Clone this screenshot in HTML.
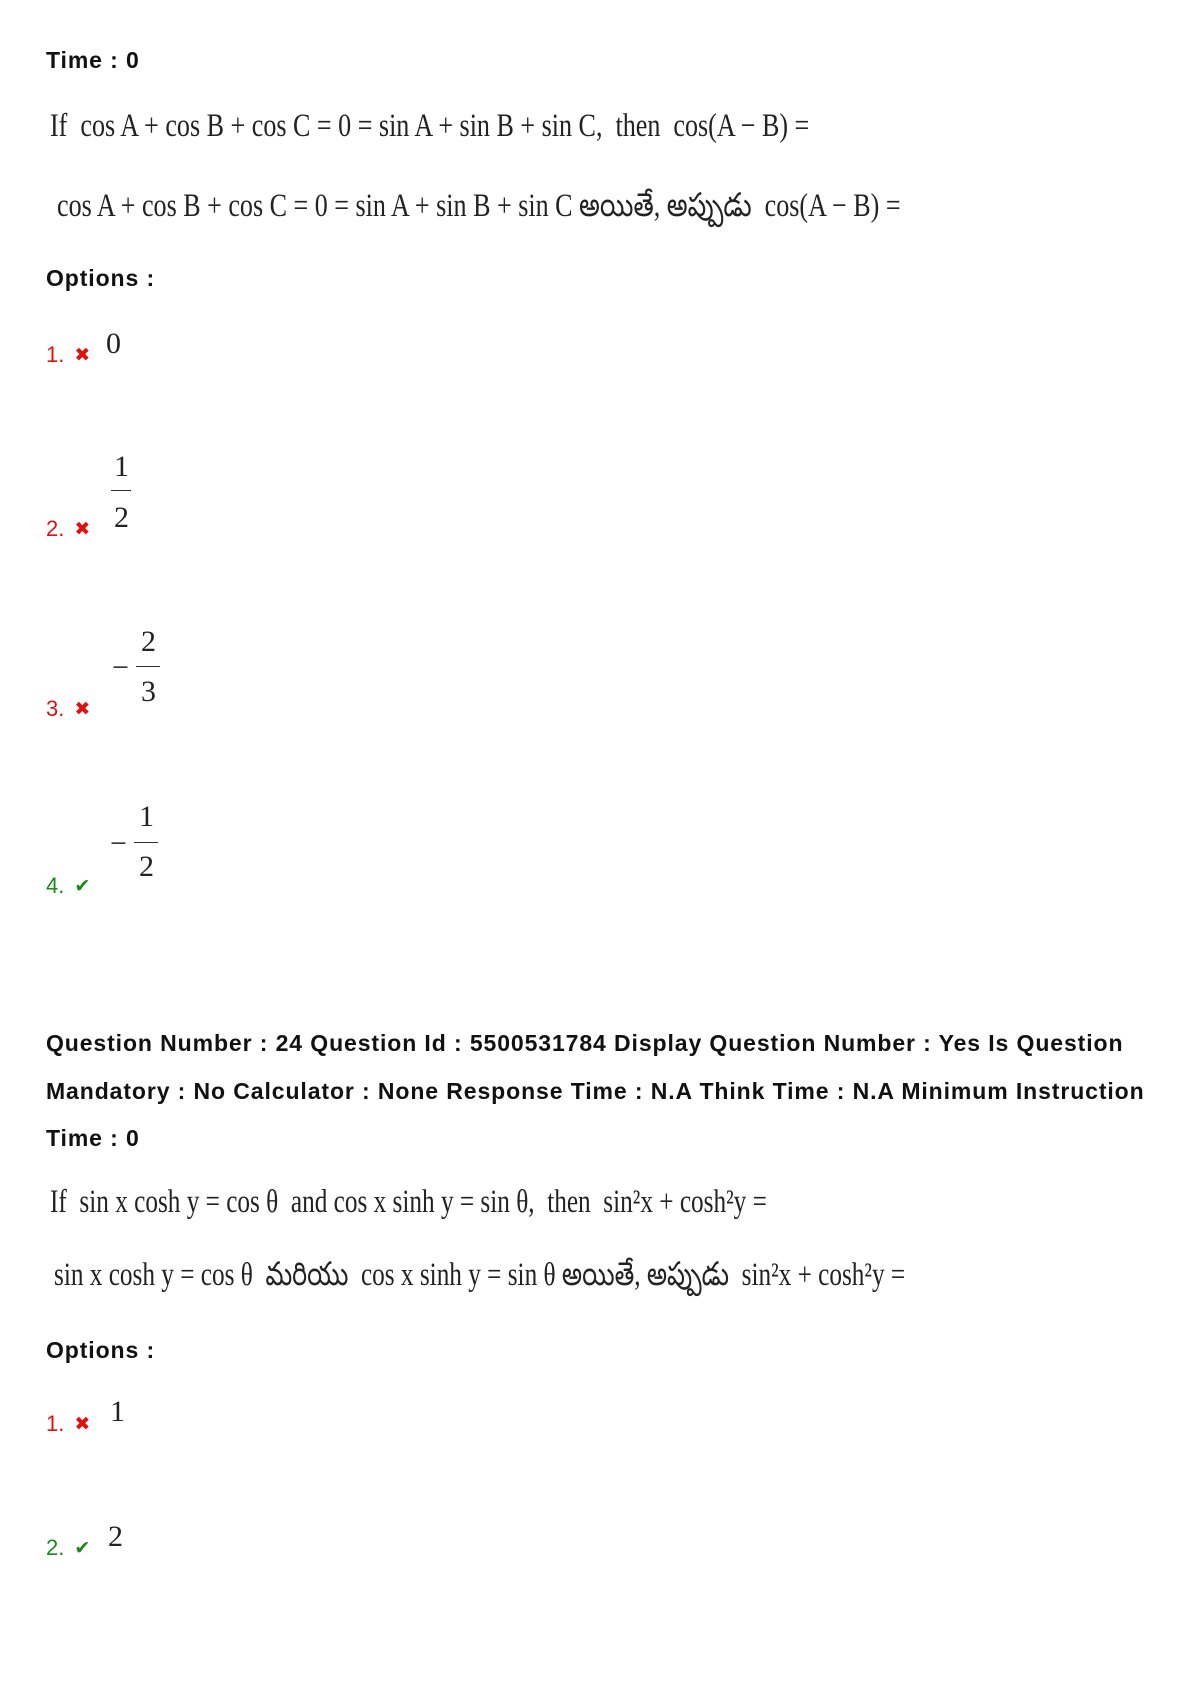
<!DOCTYPE html>
<html><head><meta charset="utf-8"><style>
body{margin:0;background:#fff;width:1190px;height:1684px;position:relative;overflow:hidden;font-family:"Liberation Sans","DejaVu Sans",sans-serif;}
.b{position:absolute;left:46px;font-weight:bold;font-size:23px;letter-spacing:0.9px;line-height:30px;color:#111;white-space:nowrap;}
.m{position:absolute;font-family:"Liberation Serif","DejaVu Serif",serif;font-size:33px;line-height:40px;color:#222;white-space:nowrap;transform-origin:0 50%;}
.n{position:absolute;left:46px;font-size:22px;line-height:30px;white-space:nowrap;}
.r{color:#e01010}.g{color:#1a8a1a}
.ic{font-size:19px;margin-left:10px;vertical-align:1px}
.f{position:absolute;font-family:"Liberation Serif",serif;font-size:30px;line-height:34px;color:#222;}
.bar{position:absolute;height:1px;background:#333;}
</style></head><body>
<div class="b" style="top:45px">Time : 0</div>
<div class="m" style="left:50px;top:106px;transform:scaleX(0.79)">If&nbsp; cos A + cos B + cos C = 0 = sin A + sin B + sin C,&nbsp; then&nbsp; cos(A − B) =</div>
<div class="m" style="left:57px;top:186px;transform:scaleX(0.79)">cos A + cos B + cos C = 0 = sin A + sin B + sin C అయితే, అప్పుడు&nbsp; cos(A − B) =</div>
<div class="b" style="top:263px">Options :</div>

<div class="n r" style="top:340px">1.<span class="ic">✖</span></div>
<div class="f" style="left:106px;top:327px">0</div>

<div class="n r" style="top:514px">2.<span class="ic">✖</span></div>
<div class="f" style="left:114px;top:450px">1</div><div class="bar" style="left:111px;top:490px;width:20px"></div><div class="f" style="left:114px;top:501px">2</div>

<div class="n r" style="top:694px">3.<span class="ic">✖</span></div>
<div class="f" style="left:112px;top:651px">−</div>
<div class="f" style="left:141px;top:625px">2</div><div class="bar" style="left:136px;top:666px;width:24px"></div><div class="f" style="left:141px;top:675px">3</div>

<div class="n g" style="top:871px">4.<span class="ic">✔</span></div>
<div class="f" style="left:110px;top:827px">−</div>
<div class="f" style="left:139px;top:800px">1</div><div class="bar" style="left:134px;top:842px;width:24px"></div><div class="f" style="left:139px;top:850px">2</div>

<div class="b" style="top:1028px">Question Number : 24 Question Id : 5500531784 Display Question Number : Yes Is Question</div>
<div class="b" style="top:1076px">Mandatory : No Calculator : None Response Time : N.A Think Time : N.A Minimum Instruction</div>
<div class="b" style="top:1123px">Time : 0</div>
<div class="m" style="left:50px;top:1182px;transform:scaleX(0.765)">If&nbsp; sin x cosh y = cos θ&nbsp; and cos x sinh y = sin θ,&nbsp; then&nbsp; sin²x + cosh²y =</div>
<div class="m" style="left:54px;top:1255px;transform:scaleX(0.765)">sin x cosh y = cos θ&nbsp; మరియు&nbsp; cos x sinh y = sin θ అయితే, అప్పుడు&nbsp; sin²x + cosh²y =</div>
<div class="b" style="top:1335px">Options :</div>

<div class="n r" style="top:1409px">1.<span class="ic">✖</span></div>
<div class="f" style="left:110px;top:1395px">1</div>
<div class="n g" style="top:1533px">2.<span class="ic">✔</span></div>
<div class="f" style="left:108px;top:1520px">2</div>
</body></html>
